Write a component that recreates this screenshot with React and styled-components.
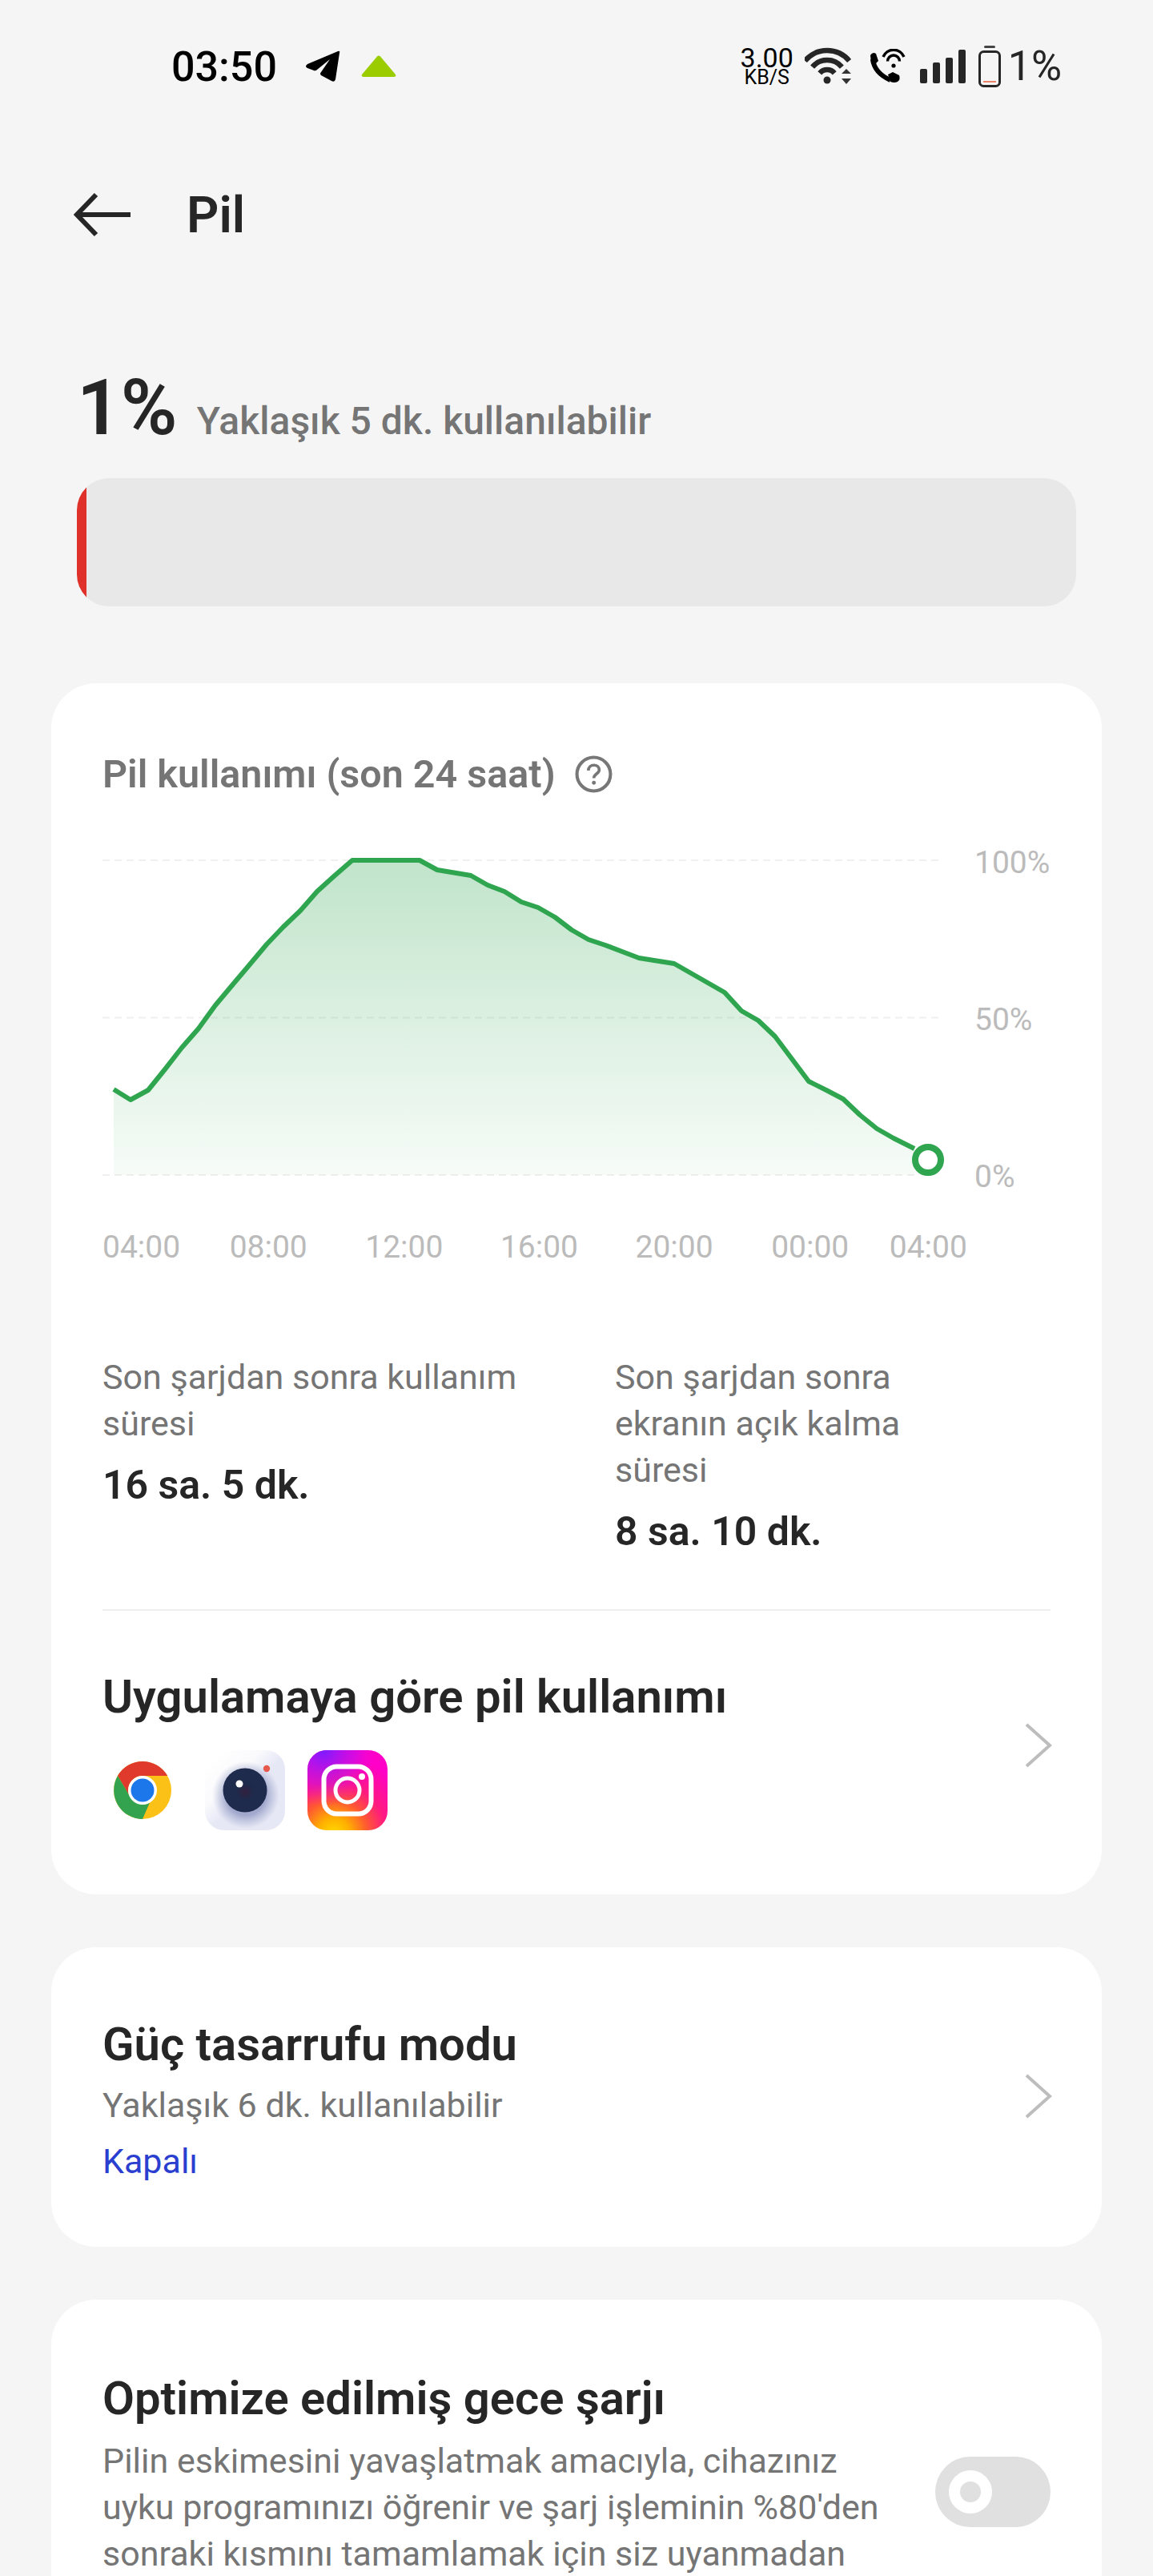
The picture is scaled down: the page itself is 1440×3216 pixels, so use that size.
import React from "react";
import styled, { createGlobalStyle } from "styled-components";

const Global = createGlobalStyle`
  html, body {
    margin: 0;
    padding: 0;
    background: #f5f5f5;
  }
  * {
    box-sizing: border-box;
  }
`;

// points read off the curve, in px inside the plot
const curve = [
  [-17, 308], [4, 321], [26, 309], [47, 283], [68, 256], [89, 232], [110, 203], [131, 178],
  [153, 152], [174, 127], [195, 105], [216, 85], [237, 61], [258, 42], [281, 22], [365, 22],
  [387, 34], [429, 41], [450, 53], [471, 61], [492, 74], [513, 81], [534, 93], [555, 109],
  [576, 121], [597, 128], [618, 136], [639, 144], [683, 151], [704, 163], [725, 175], [746, 187],
  [767, 210], [788, 222], [809, 242], [830, 270], [851, 298], [873, 309], [894, 320], [915, 340],
  [936, 357], [957, 369], [983, 382],
].map(([x, y]) => [x + 31, y]);

const linePath = curve.map(([x, y], i) => `${i ? "L" : "M"}${x} ${y}`).join(" ");
const areaPath = `${linePath} L${curve[curve.length - 1][0]} 415 L${curve[0][0]} 415 Z`;

const ticks = [
  { label: "04:00", gap: 0 },
  { label: "08:00", gap: 61.5 },
  { label: "12:00", gap: 72.5 },
  { label: "16:00", gap: 71.5 },
  { label: "20:00", gap: 71.5 },
  { label: "00:00", gap: 72.5 },
  { label: "04:00", gap: 50.5 },
];

export default function App() {
  return (
    <Page>
      <Global />
      <StatusBar>
        <Clock>03:50</Clock>
        <TelegramIcon />
        <TriangleIcon />
        <StatusRight>
          <Speed>
            <SpeedValue>3.00</SpeedValue>
            <SpeedUnit>KB/S</SpeedUnit>
          </Speed>
          <WifiIcon />
          <CallIcon />
          <SignalIcon />
          <BatteryIcon />
          <BatteryText>1%</BatteryText>
        </StatusRight>
      </StatusBar>

      <TopBar>
        <svg width="72" height="56" viewBox="0 0 72 56" fill="none">
          <path d="M71 28H4M28 3 4 28l0 0 24 25" stroke="#262626" strokeWidth="6" />
        </svg>
        <PageTitle>Pil</PageTitle>
      </TopBar>

      <Summary>
        <Percent>1%</Percent>
        <SummaryText>Yaklaşık 5 dk. kullanılabilir</SummaryText>
      </Summary>
      <Level>
        <LevelFill />
      </Level>

      <Cards>
        <Card $pad="0 64px 80px">
          <ChartTitle>
            Pil kullanımı (son 24 saat)
            <svg width="47" height="47" viewBox="0 0 46 46" fill="none">
              <circle cx="23" cy="23" r="20.5" stroke="#777" strokeWidth="4" />
              <path d="M16.5 18.5c0-4 3-6.5 6.7-6.5 3.8 0 6.5 2.4 6.5 5.8 0 4.6-6.500 5-6.500 10" stroke="#777" strokeWidth="3.6" />
              <circle cx="23.2" cy="33.5" r="2.4" fill="#777" />
            </svg>
          </ChartTitle>
          <ChartRow>
            <svg width="1056" height="440" viewBox="0 0 1056 440" fill="none">
              <defs>
                <linearGradient id="area" x1="0" y1="0" x2="0" y2="1">
                  <stop offset="0" stopColor="#2fa550" stopOpacity="0.3" />
                  <stop offset="1" stopColor="#2fa550" stopOpacity="0.04" />
                </linearGradient>
              </defs>
              <path d="M0 22H1048M0 218.5H1048" stroke="#f0f0f0" strokeWidth="2" strokeDasharray="9 6" />
              <path d="M0 415H1020" stroke="#f0f0f0" strokeWidth="2" strokeDasharray="9 6" />
              <path d={areaPath} fill="url(#area)" />
              <path d={linePath} stroke="#2fa550" strokeWidth="6" strokeLinejoin="round" />
              <circle cx="1031" cy="396" r="16" fill="#fff" stroke="#2fa550" strokeWidth="8" />
            </svg>
            <YLabels>
              <span>100%</span>
              <span>50%</span>
              <span>0%</span>
            </YLabels>
          </ChartRow>
          <XLabels>
            {ticks.map((t, i) => (
              <Tick key={i} $gap={t.gap}>{t.label}</Tick>
            ))}
          </XLabels>
          <Stats>
            <Stat>
              <StatLabel>Son şarjdan sonra kullanım<br />süresi</StatLabel>
              <StatValue>16 sa. 5 dk.</StatValue>
            </Stat>
            <Stat>
              <StatLabel>Son şarjdan sonra<br />ekranın açık kalma<br />süresi</StatLabel>
              <StatValue>8 sa. 10 dk.</StatValue>
            </Stat>
          </Stats>
          <Divider />
          <UsageRow $top={74}>
            <div>
              <RowTitle>Uygulamaya göre pil kullanımı</RowTitle>
              <AppIcons>
                <ChromeIcon />
                <CameraIcon />
                <InstagramIcon />
              </AppIcons>
            </div>
            <Chevron />
          </UsageRow>
        </Card>

        <Card $pad="88px 64px 78px">
          <UsageRow>
            <div>
              <RowTitle>Güç tasarrufu modu</RowTitle>
              <SubText>Yaklaşık 6 dk. kullanılabilir</SubText>
              <StateText>Kapalı</StateText>
            </div>
            <Chevron />
          </UsageRow>
        </Card>

        <Card $pad="90px 64px 120px">
          <ToggleRow>
            <div>
              <RowTitle>Optimize edilmiş gece şarjı</RowTitle>
              <Description>
                Pilin eskimesini yavaşlatmak amacıyla, cihazınız<br />
                uyku programınızı öğrenir ve şarj işleminin %80'den<br />
                sonraki kısmını tamamlamak için siz uyanmadan
              </Description>
            </div>
            <Toggle>
              <Knob />
            </Toggle>
          </ToggleRow>
        </Card>
      </Cards>
    </Page>
  );
}

function TelegramIcon() {
  return (
    <svg width="44" height="40" viewBox="0 0 44 40" style={{ marginLeft: 35 }}>
      <path d="M43 3Q44 0 41 1L3 17Q-1 20 3 22L11 25Q13 26 15 24L31 11 20 27Q18 29 20 31L33 38Q37 40 38 36Z" fill="#000" />
    </svg>
  );
}

function TriangleIcon() {
  return (
    <svg width="44" height="28" viewBox="0 0 44 28" style={{ marginLeft: 26 }}>
      <path d="M20 1.5Q22 -.5 24 1.5L43 24Q44 27 41 27H3Q0 27 1 24Z" fill="#9bcc00" />
    </svg>
  );
}

function WifiIcon() {
  return (
    <svg width="60" height="48" viewBox="0 0 60 48" fill="none" style={{ marginRight: 4 }}>
      <g stroke="#262626" strokeWidth="6.5">
        <path d="M.4 17A36 36 0 0 1 55.6 17" />
        <path d="M9.6 24.6A24 24 0 0 1 46.4 24.6" />
        <path d="M18.8 32.3A12 12 0 0 1 37.2 32.3" />
      </g>
      <circle cx="28" cy="41" r="4.5" fill="#262626" />
      <path d="M52 27l6 6H46ZM46 39H58L52 46Z" fill="#333" />
    </svg>
  );
}

function CallIcon() {
  return (
    <svg width="48" height="44" viewBox="0 0 48 44" fill="none" style={{ marginRight: 2 }}>
      <path d="M6 13Q8 30 28 39" stroke="#000" strokeWidth="6" />
      <path d="M3 8Q6 3 10 6L13 15 8 20 4 18ZM25 32l6-3 8 4Q41 38 37 41 33 43 28 41Z" fill="#000" />
      <g stroke="#000" strokeWidth="3.4">
        <path d="M19 10A14 14 0 0 1 45 10" />
        <path d="M24.500 15.500A7 7 0 0 1 39.500 15.500" />
      </g>
      <circle cx="32" cy="21" r="2.600" fill="#000" />
    </svg>
  );
}

function SignalIcon() {
  return (
    <svg width="58" height="42" viewBox="0 0 58 42" fill="#262626">
      <rect x="0" y="24" width="9" height="18" rx="2" />
      <rect x="16" y="16" width="9" height="26" rx="2" />
      <rect x="32" y="10" width="9" height="32" rx="2" />
      <rect x="48" y="0" width="9" height="42" rx="2" />
    </svg>
  );
}

function BatteryIcon() {
  return (
    <svg width="28" height="52" viewBox="0 0 28 52" fill="none">
      <rect x="7" y="0" width="14" height="3" rx="1.500" fill="#444" />
      <rect x="1.500" y="7.500" width="25" height="43" rx="5" stroke="#262626" strokeWidth="3" />
      <rect x="6" y="44" width="16" height="2" fill="#ea8468" />
    </svg>
  );
}

function ChromeIcon() {
  return (
    <IconBox>
      <svg width="72" height="72" viewBox="0 0 72 72">
        <circle cx="36" cy="36" r="36" fill="#fbc116" />
        <path d="M36 0A36 36 0 0 1 67.200 18H36A18 18 0 0 0 19 42L5 18A36 36 0 0 1 36 0Z" fill="#e03a2c" />
        <path d="M5 18 21 45A18 18 0 0 0 45 51.600L36 72A36 36 0 0 1 5 18Z" fill="#33a350" />
        <circle cx="36" cy="36" r="18" fill="#fff" />
        <circle cx="36" cy="36" r="14.500" fill="#1c78ea" />
      </svg>
    </IconBox>
  );
}

function CameraIcon() {
  return (
    <svg width="100" height="100" viewBox="0 0 100 100">
      <defs>
        <linearGradient id="camBg" x1="0.1" y1="0.1" x2="0.6" y2="0.6">
          <stop offset="0" stopColor="#ffffff" />
          <stop offset="0.5" stopColor="#fafafd" />
          <stop offset="0.85" stopColor="#e6e8f5" />
        </linearGradient>
        <radialGradient id="camShadow" cx="0.5" cy="0.5" r="0.5">
          <stop offset="0.6" stopColor="#5f6aa6" stopOpacity="0.5" />
          <stop offset="1" stopColor="#7c86b8" stopOpacity="0" />
        </radialGradient>
        <radialGradient id="camInner" cx="0.5" cy="0.6" r="0.5">
          <stop offset="0" stopColor="#33203f" />
          <stop offset="1" stopColor="#1c2a4c" />
        </radialGradient>
      </defs>
      <rect width="100" height="100" rx="24" fill="url(#camBg)" />
      <circle cx="51" cy="56" r="42" fill="url(#camShadow)" />
      <circle cx="50" cy="50" r="27.500" fill="#1e2b4c" />
      <circle cx="50" cy="50" r="11" fill="url(#camInner)" />
      <circle cx="43" cy="42" r="4.500" fill="#fff" />
      <circle cx="77" cy="23" r="4.200" fill="#e65a4e" />
    </svg>
  );
}

function InstagramIcon() {
  return (
    <svg width="100" height="100" viewBox="0 0 100 100" fill="none">
      <defs>
        <radialGradient id="igA" cx="0.33" cy="1.05" r="1">
          <stop offset="0" stopColor="#ffdd00" />
          <stop offset="0.2" stopColor="#ffb000" />
          <stop offset="0.42" stopColor="#ff5a30" />
          <stop offset="0.65" stopColor="#ff1a80" />
          <stop offset="1" stopColor="#ff00c8" />
        </radialGradient>
        <radialGradient id="igB" cx="0.2" cy="0" r="0.7">
          <stop offset="0" stopColor="#7a1cff" />
          <stop offset="0.6" stopColor="#c010f0" stopOpacity="0.55" />
          <stop offset="1" stopColor="#ff00c8" stopOpacity="0" />
        </radialGradient>
      </defs>
      <rect width="100" height="100" rx="24" fill="url(#igA)" />
      <rect width="100" height="100" rx="24" fill="url(#igB)" />
      <rect x="20.500" y="20.500" width="59" height="59" rx="16" stroke="#fff" strokeWidth="6" />
      <circle cx="50" cy="50" r="15" stroke="#fff" strokeWidth="5" />
      <circle cx="68" cy="33" r="4" fill="#fff" />
    </svg>
  );
}

function Chevron() {
  return (
    <ChevronBox width="34" height="56" viewBox="0 0 34 56" fill="none">
      <path d="M2 2 31 28 2 54" stroke="#bdbdbd" strokeWidth="4" />
    </ChevronBox>
  );
}

const Page = styled.div`
  width: 1440px;
  height: 3216px;
  overflow: hidden;
  background: #f5f5f5;
  font-family: Roboto, "Liberation Sans", sans-serif;
  color: #262626;
`;

const StatusBar = styled.div`
  height: 166px;
  padding: 0 114px 0 214px;
  display: flex;
  align-items: center;
`;

const Clock = styled.span`
  font-size: 52px;
  font-weight: 500;
  color: #000;
`;

const StatusRight = styled.div`
  margin-left: auto;
  display: flex;
  align-items: center;
  gap: 15px;
`;

const Speed = styled.div`
  display: flex;
  flex-direction: column;
  align-items: center;
  color: #000;
  width: 70px;
  margin-right: -3px;
`;

const SpeedValue = styled.span`
  font-size: 34px;
  line-height: 28px;
`;

const SpeedUnit = styled.span`
  font-size: 25px;
  line-height: 22px;
`;

const BatteryText = styled.span`
  font-size: 52px;
  line-height: 1;
  margin-left: -6px;
`;

const TopBar = styled.div`
  height: 204px;
  padding-left: 92px;
  display: flex;
  align-items: center;
  gap: 69px;
`;

const PageTitle = styled.h1`
  margin: 0;
  font-size: 63px;
  font-weight: 600;
  line-height: 1;
`;

const Summary = styled.div`
  margin-top: 84px;
  padding-left: 96px;
  height: 143px;
  display: flex;
  align-items: baseline;
  gap: 24px;
`;

const Percent = styled.span`
  font-size: 96px;
  font-weight: 600;
  line-height: 110px;
`;

const SummaryText = styled.span`
  font-size: 48px;
  font-weight: 500;
  color: #757575;
`;

const Level = styled.div`
  margin: 0 96px;
  height: 160px;
  border-radius: 40px;
  background: #e8e8e8;
  overflow: hidden;
`;

const LevelFill = styled.div`
  width: 12px;
  height: 100%;
  background: #e0302a;
`;

const Cards = styled.div`
  margin: 96px 64px 0;
  display: flex;
  flex-direction: column;
  gap: 66px;
`;

const Card = styled.section`
  background: #fff;
  border-radius: 56px;
  padding: ${(p) => p.$pad};
`;

const ChartTitle = styled.div`
  height: 199px;
  padding-top: 87px;
  display: flex;
  align-items: flex-start;
  gap: 24px;
  font-size: 48.5px;
  line-height: 54px;
  font-weight: 600;
  color: #757575;
  svg {
    margin-top: 3px;
  }
`;

const ChartRow = styled.div`
  display: flex;
  height: 440px;
  width: 1184px;
`;

const YLabels = styled.div`
  margin-left: 33px;
  padding-top: 2px;
  display: flex;
  flex-direction: column;
  justify-content: space-between;
  font-size: 39px;
  line-height: 46px;
  color: #bbbbbb;
`;

const XLabels = styled.div`
  margin-top: 42px;
  display: flex;
  font-size: 39px;
  line-height: 46px;
  color: #bbbbbb;
`;

const Tick = styled.span`
  margin-left: ${(p) => p.$gap}px;
`;

const Stats = styled.div`
  margin-top: 110px;
  display: grid;
  grid-template-columns: 640px 1fr;
`;

const Stat = styled.div`
  display: flex;
  flex-direction: column;
`;

const StatLabel = styled.div`
  font-size: 43px;
  line-height: 58px;
  color: #757575;
`;

const StatValue = styled.div`
  margin-top: 18px;
  font-size: 50px;
  line-height: 60px;
  font-weight: 600;
`;

const Divider = styled.div`
  margin-top: 67px;
  height: 2px;
  background: #eeeeee;
`;

const UsageRow = styled.div`
  padding-top: ${(p) => p.$top || 0}px;
  display: flex;
  align-items: center;
  justify-content: space-between;
`;

const ChevronBox = styled.svg`
  margin: 0 -2px 12px 0;
`;

const RowTitle = styled.div`
  font-size: 58px;
  line-height: 66px;
  font-weight: 600;
`;

const AppIcons = styled.div`
  margin-top: 34px;
  display: flex;
  gap: 28px;
`;

const IconBox = styled.div`
  width: 100px;
  height: 100px;
  display: flex;
  align-items: center;
  justify-content: center;
`;

const SubText = styled.div`
  margin-top: 14px;
  font-size: 43px;
  line-height: 58px;
  color: #757575;
`;

const StateText = styled.div`
  margin-top: 12px;
  font-size: 43px;
  line-height: 58px;
  color: #2a3fd0;
`;

const ToggleRow = styled.div`
  display: flex;
  align-items: flex-start;
  justify-content: space-between;
`;

const Description = styled(SubText)`
  margin-top: 16px;
`;

const Toggle = styled.div`
  margin-top: 106px;
  width: 144px;
  height: 88px;
  border-radius: 44px;
  background: #e0e0e0;
  display: flex;
  align-items: center;
  padding-left: 17px;
`;

const Knob = styled.div`
  width: 54px;
  height: 54px;
  border-radius: 50%;
  border: 14px solid #fff;
`;
